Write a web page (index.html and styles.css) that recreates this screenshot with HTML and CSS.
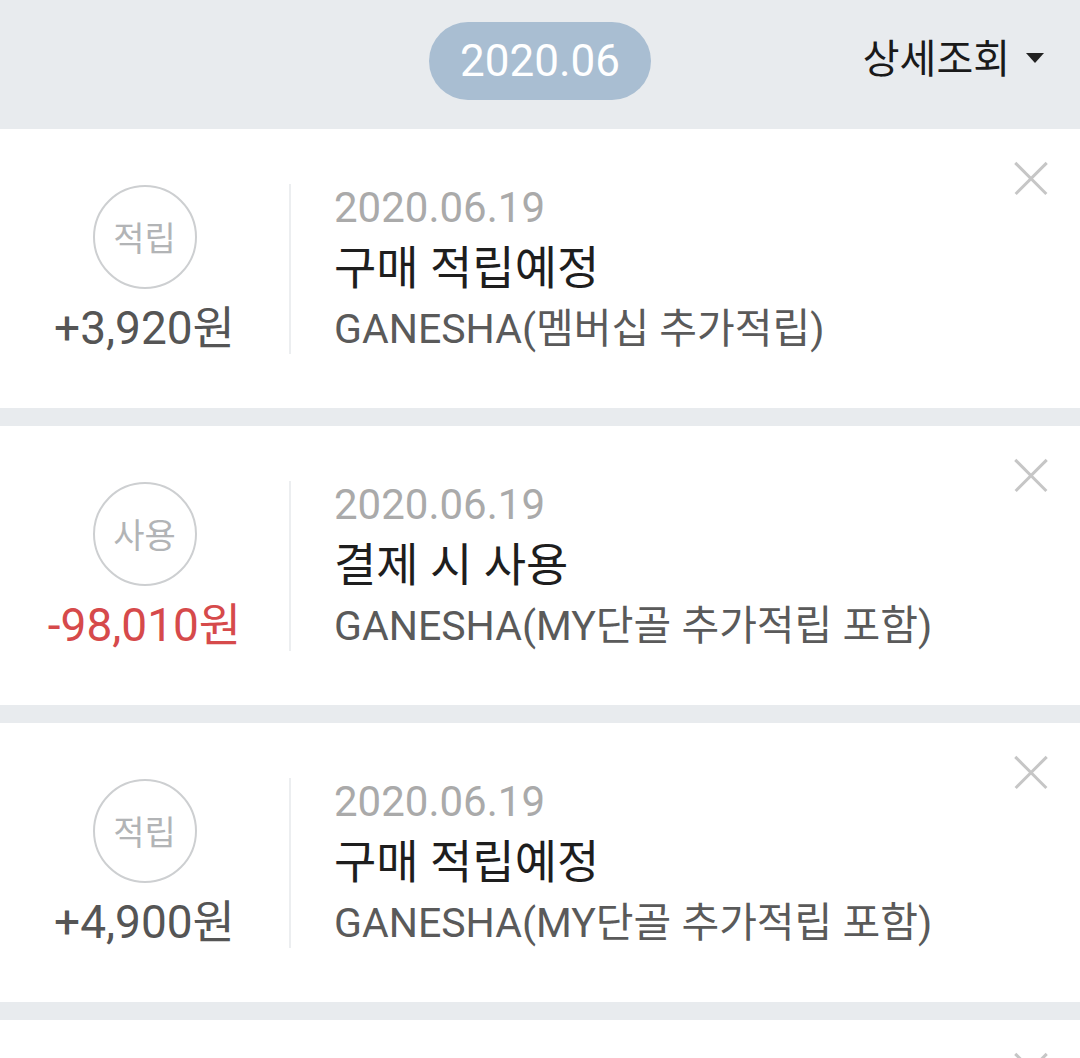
FILE: index.html
```html
<!DOCTYPE html>
<html lang="ko">

<head>
    <meta charset="UTF-8">
    <meta name="viewport" content="width=device-width, initial-scale=1.0">
    <title>적립금 내역</title>
    <link rel="stylesheet" href="styles.css">
</head>

<body>
    <div class="top">
        <span></span>
        <div class="month">2020.06</div>
        <a href="javascript:;" class="detail">상세조회<i class="caret"></i></a>
    </div>

    <ul class="history">
        <li class="item">
            <div class="left">
                <div class="badge">적립</div>
                <div class="amount">+3,920원</div>
            </div>
            <div class="line"></div>
            <div class="info">
                <p class="date">2020.06.19</p>
                <p class="title">구매 적립예정</p>
                <p class="desc">GANESHA(멤버십 추가적립)</p>
            </div>
            <a href="javascript:;" class="close"></a>
        </li>
        <li class="item">
            <div class="left">
                <div class="badge">사용</div>
                <div class="amount minus">-98,010원</div>
            </div>
            <div class="line"></div>
            <div class="info">
                <p class="date">2020.06.19</p>
                <p class="title">결제 시 사용</p>
                <p class="desc">GANESHA(MY단골 추가적립 포함)</p>
            </div>
            <a href="javascript:;" class="close"></a>
        </li>
        <li class="item">
            <div class="left">
                <div class="badge">적립</div>
                <div class="amount">+4,900원</div>
            </div>
            <div class="line"></div>
            <div class="info">
                <p class="date">2020.06.19</p>
                <p class="title">구매 적립예정</p>
                <p class="desc">GANESHA(MY단골 추가적립 포함)</p>
            </div>
            <a href="javascript:;" class="close"></a>
        </li>
        <li class="item">
            <a href="javascript:;" class="close"></a>
        </li>
    </ul>
</body>

</html>
```

FILE: styles.css
```css
* {
    margin: 0;
    padding: 0;
}

body {
    background-color: #e8ebee;
    font-family: Roboto, "Noto Sans CJK KR", sans-serif;
    overflow: hidden;
}

a {
    text-decoration: none;
}

/* 상단 월 선택 */
.top {
    height: 129px;
    display: grid;
    grid-template-columns: 1fr auto 1fr;
    align-items: center;
}

.top .month {
    width: 222px;
    height: 78px;
    margin-top: -7px;
    line-height: 78px;
    border-radius: 39px;
    background-color: #a9bed2;
    color: #fff;
    font-size: 44px;
    text-align: center;
}

.top .detail {
    justify-self: end;
    margin-right: 36px;
    margin-top: -18px;
    display: flex;
    align-items: center;
    color: #1a1a1a;
    font-size: 40px;
}

.top .caret {
    margin-left: 16px;
    margin-top: 4px;
    width: 0;
    height: 0;
    border-left: 9px solid transparent;
    border-right: 9px solid transparent;
    border-top: 10px solid #222;
}

/* 내역 목록 */
.history {
    list-style: none;
}

.history .item {
    position: relative;
    height: 279px;
    margin-bottom: 18px;
    background-color: #fff;
    display: flex;
    align-items: center;
}

.item .left {
    width: 289px;
    display: flex;
    flex-direction: column;
    align-items: center;
}

.item .badge {
    width: 100px;
    height: 100px;
    border: 2px solid #cdcfd1;
    border-radius: 50%;
    display: flex;
    align-items: center;
    justify-content: center;
    color: #b2b4b6;
    font-size: 34px;
}

.item .amount {
    margin-top: 14px;
    line-height: 50px;
    color: #555;
    font-size: 46px;
}

.item .amount.minus {
    color: #d64a4b;
}

.item .line {
    width: 2px;
    height: 170px;
    background-color: #eceef0;
}

.item .info {
    padding-left: 43px;
}

.info p {
    height: 61px;
    line-height: 61px;
    white-space: nowrap;
}

.info .date {
    color: #aaa;
    font-size: 42px;
}

.info .title {
    color: #1e1e1e;
    font-size: 46px;
}

.info .desc {
    color: #5a5a5a;
    font-size: 41px;
}

/* 삭제 버튼 */
.item .close {
    position: absolute;
    top: 32px;
    right: 32px;
    width: 34px;
    height: 34px;
}

.item .close::before,
.item .close::after {
    content: "";
    position: absolute;
    left: -5px;
    top: 16px;
    width: 44px;
    height: 2.5px;
    background-color: #c6c6c6;
    transform: rotate(45deg);
}

.item .close::after {
    transform: rotate(-45deg);
}
```
